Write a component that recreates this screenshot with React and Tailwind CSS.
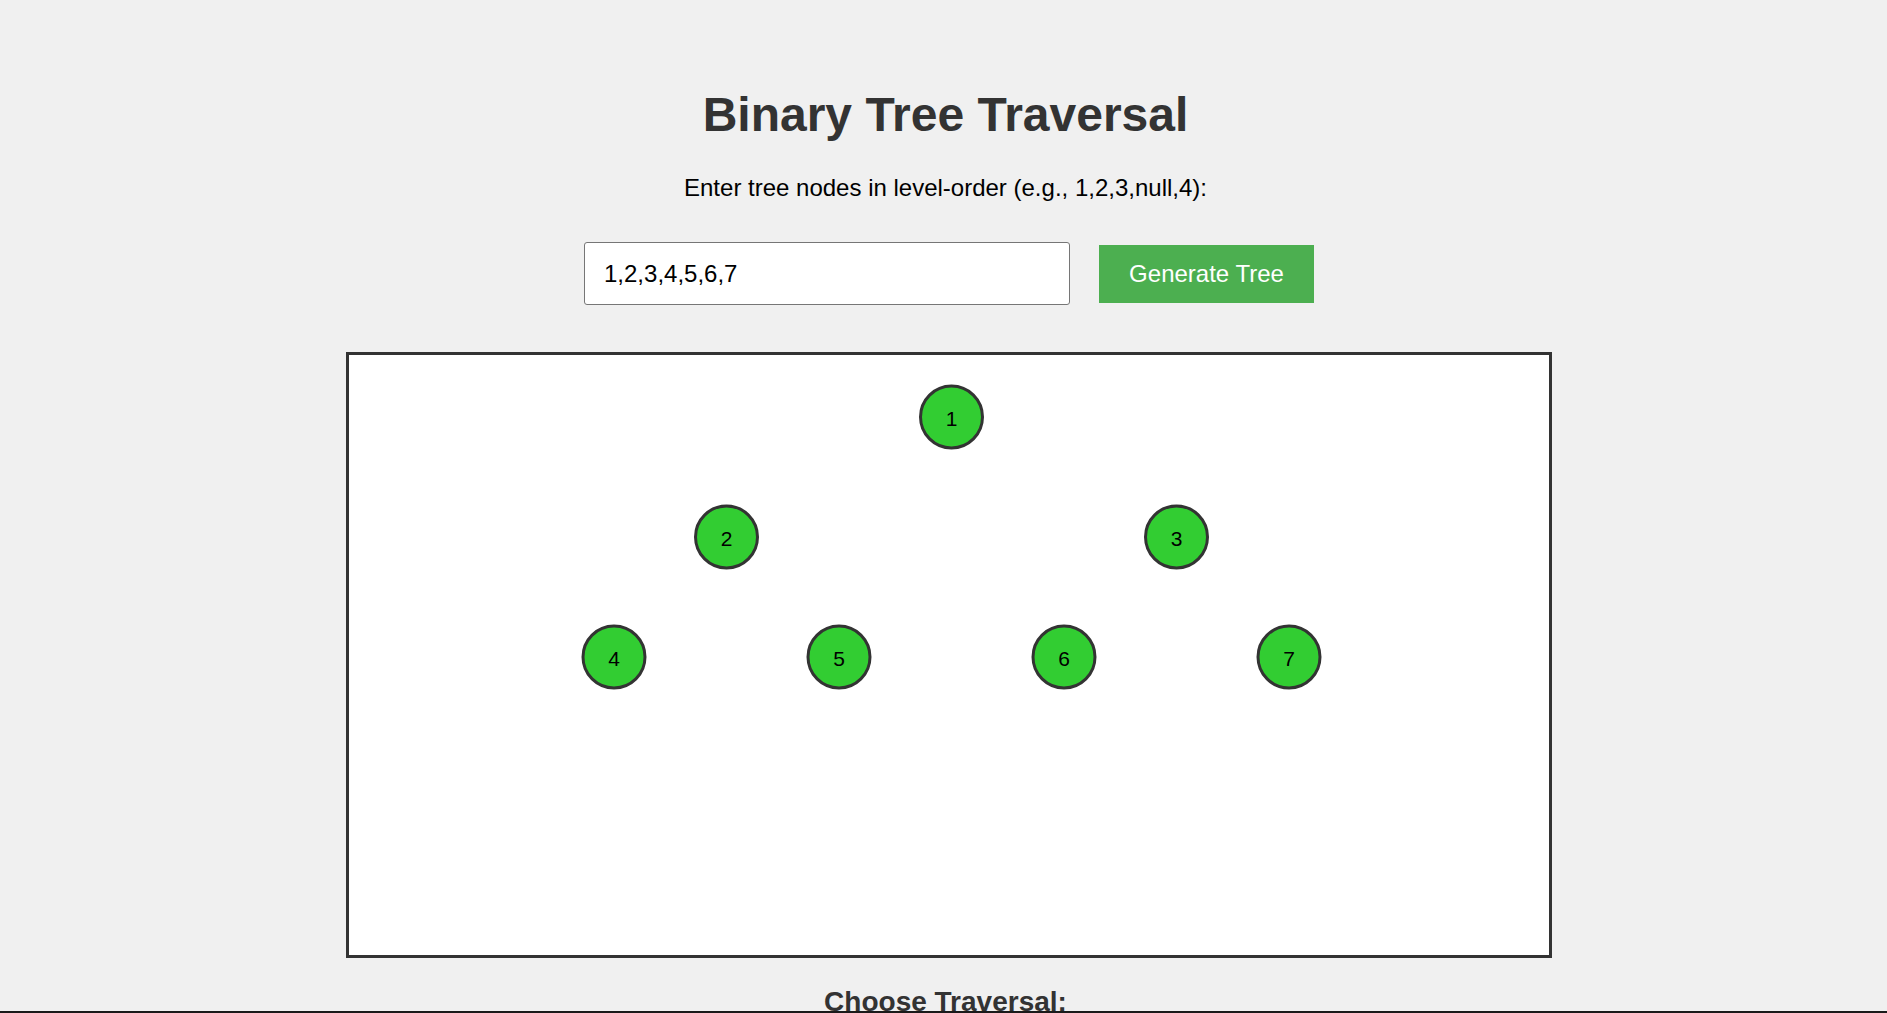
import React from "react";

const nodes = [
  { v: 1, x: 602.5, y: 62 },
  { v: 2, x: 377.5, y: 182 },
  { v: 3, x: 827.5, y: 182 },
  { v: 4, x: 265, y: 302 },
  { v: 5, x: 490, y: 302 },
  { v: 6, x: 715, y: 302 },
  { v: 7, x: 940, y: 302 },
];

export default function App() {
  return (
    <div
      className="relative h-[1013px] w-full overflow-hidden bg-[#f0f0f0] flex flex-col items-center text-center pl-[4px]"
      style={{ fontFamily: '"Liberation Sans", Arial, sans-serif' }}
    >
      <h1 className="mt-[87px] text-[48px] leading-[56px] font-bold text-[#333]">
        Binary Tree Traversal
      </h1>
      <p className="mt-[31px] text-[24px] leading-[28px] text-black">
        Enter tree nodes in level-order (e.g., 1,2,3,null,4):
      </p>
      <div className="mt-[40px] flex items-center justify-center gap-[29px] pl-[7px]">
        <input
          type="text"
          defaultValue="1,2,3,4,5,6,7"
          className="h-[63px] w-[486px] rounded-[3px] border border-[#767676] bg-white pl-[19px] text-[24px] text-black outline-none"
          style={{ fontFamily: '"Liberation Sans", Arial, sans-serif' }}
        />
        <button
          className="h-[58px] w-[215px] bg-[#4CAF50] text-[24px] text-white"
          style={{ fontFamily: '"Liberation Sans", Arial, sans-serif' }}
        >
          Generate Tree
        </button>
      </div>
      <div className="mt-[47px] ml-[7px] border-[3px] border-[#333] bg-white">
        <svg width="1200" height="600" viewBox="0 0 1200 600" className="block">
          {nodes.map((n) => (
            <g key={n.v}>
              <circle cx={n.x} cy={n.y} r="31" fill="#32CD32" stroke="#333" strokeWidth="3" />
              <text
                x={n.x}
                y={n.y + 1}
                textAnchor="middle"
                dominantBaseline="central"
                fontSize="21"
                fill="#000"
                fontFamily='"Liberation Sans", Arial, sans-serif'
              >
                {n.v}
              </text>
            </g>
          ))}
        </svg>
      </div>
      <h3 className="mt-[28px] text-[28px] leading-[32px] font-bold text-[#333]">
        Choose Traversal:
      </h3>
      <div className="absolute bottom-0 left-0 right-0 h-[2px] bg-[#1a1a1a]" />
    </div>
  );
}
